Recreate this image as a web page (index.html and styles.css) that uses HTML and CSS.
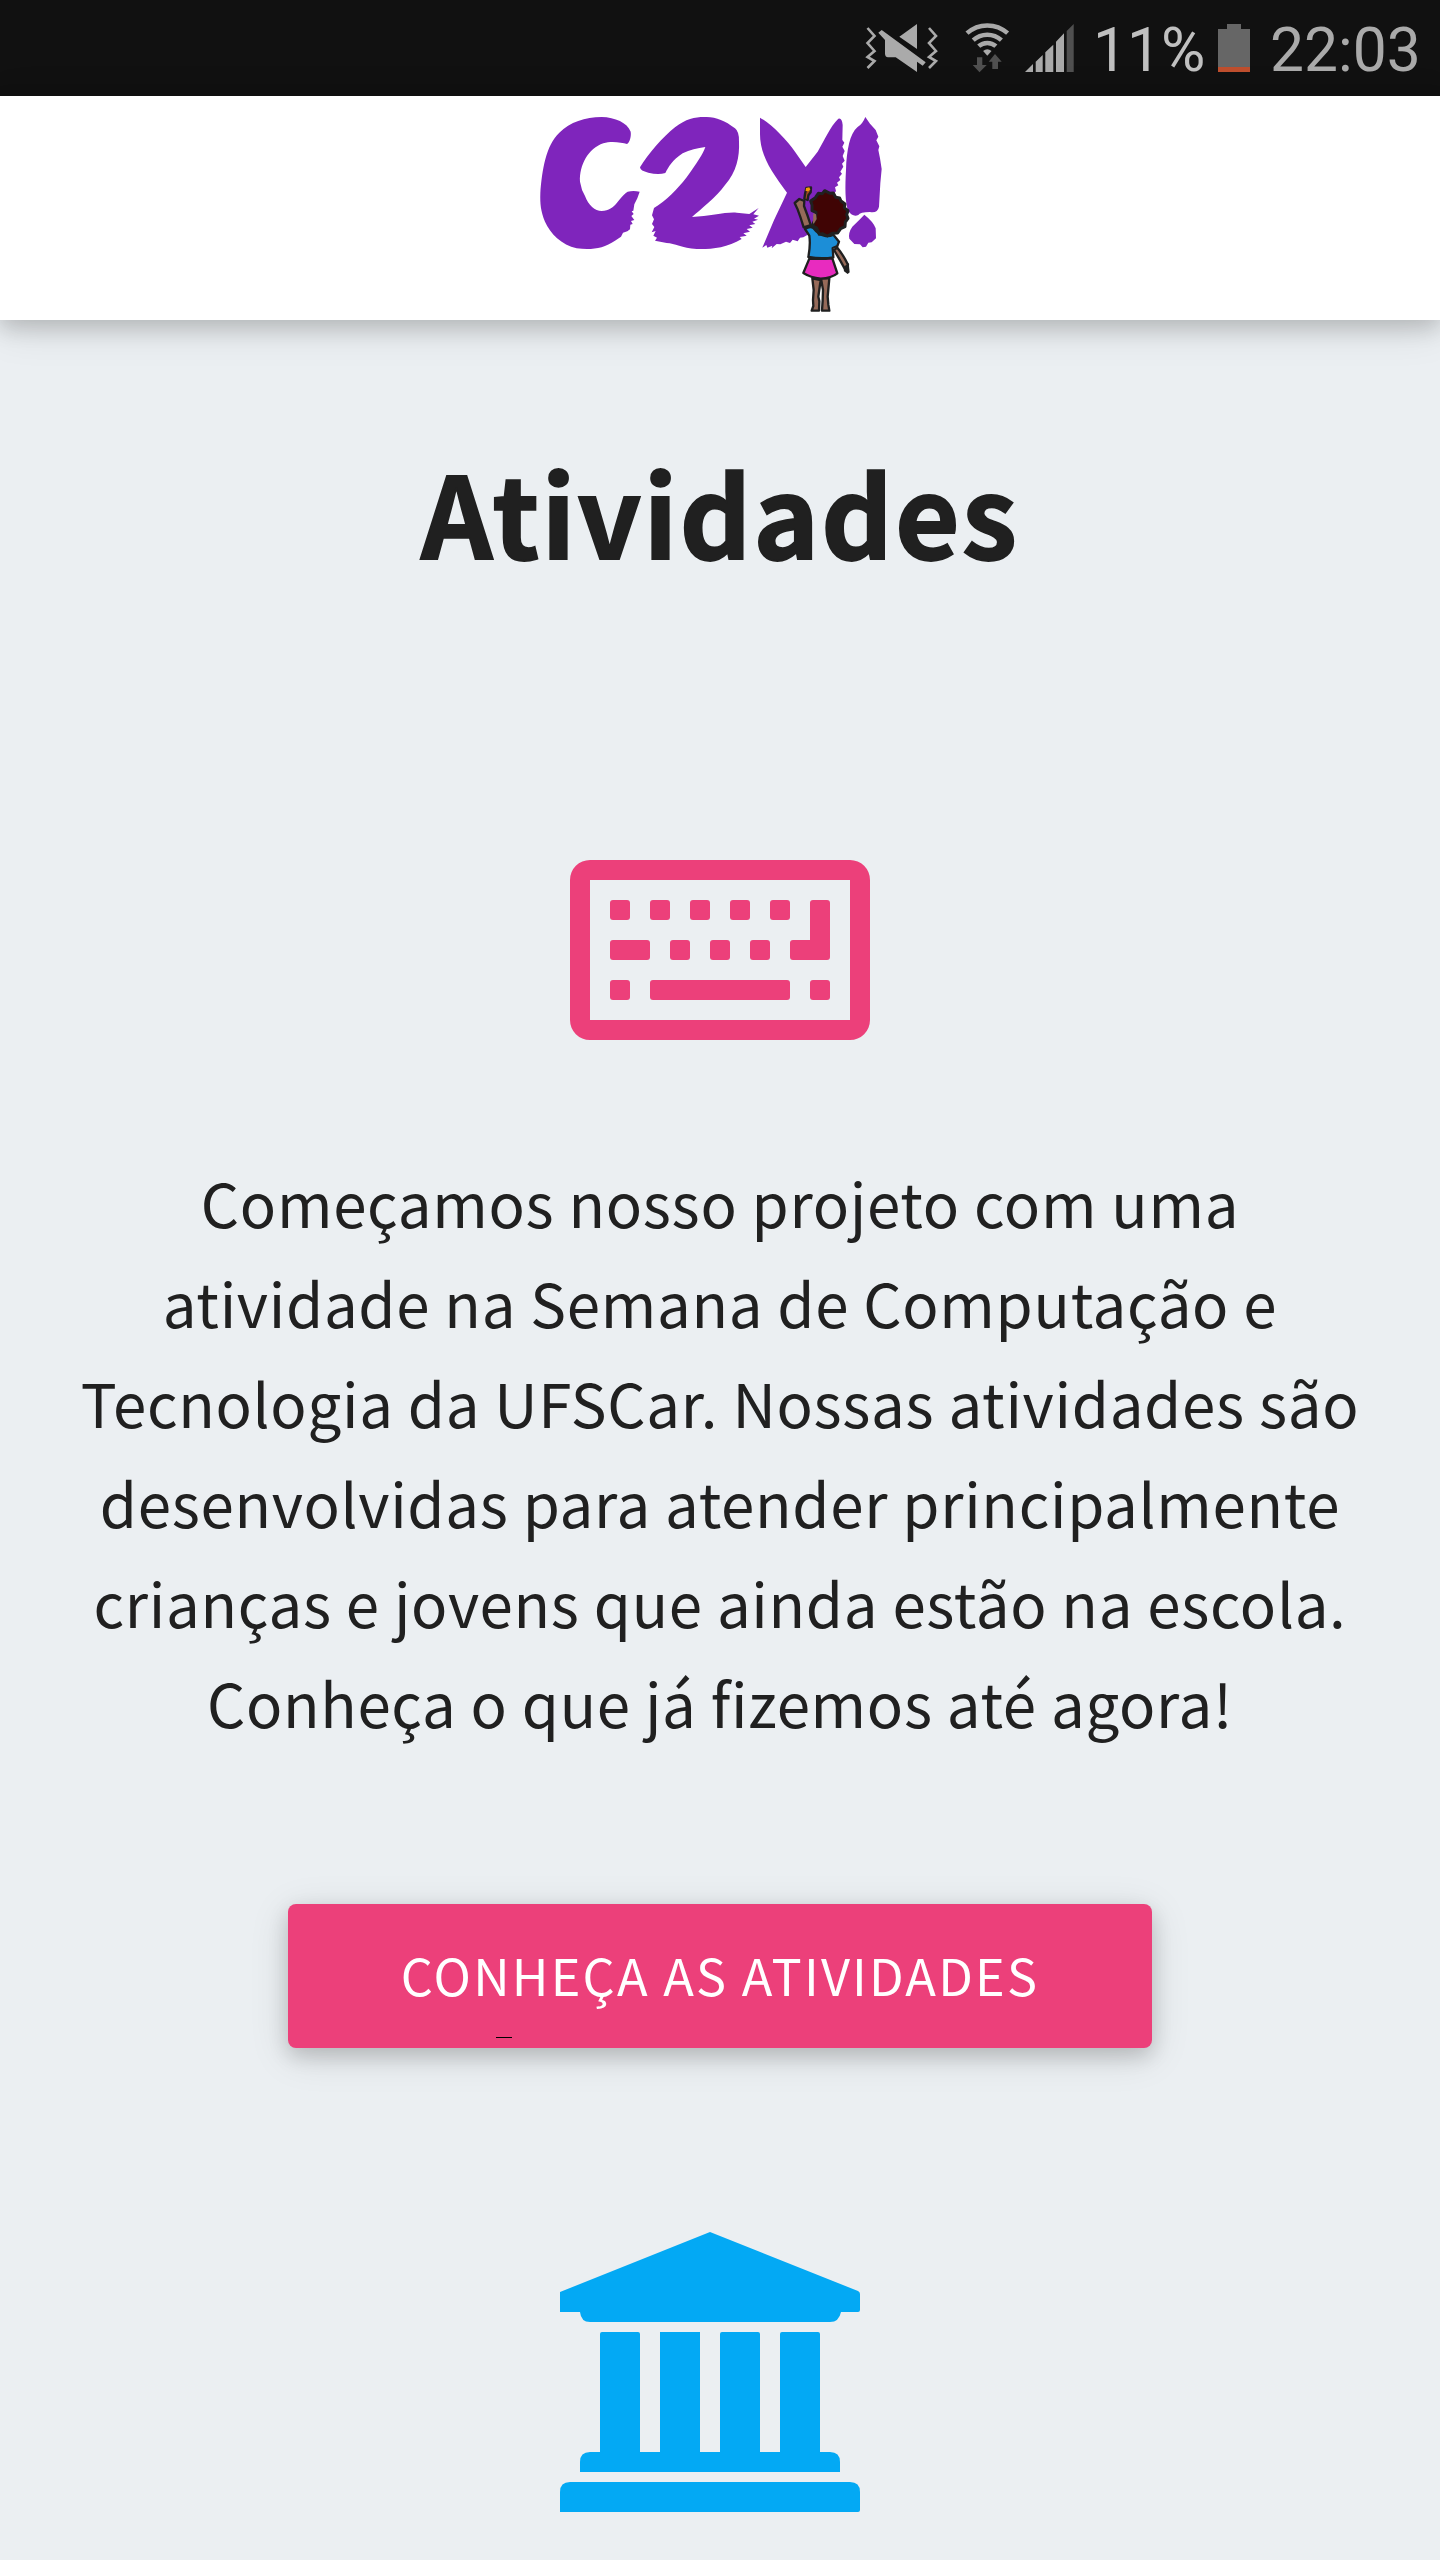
FILE: index.html
```html
<!DOCTYPE html>
<html lang="pt-BR">
<head>
<meta charset="utf-8">
<title>C2Y! Atividades</title>
<link rel="stylesheet" href="styles.css">
</head>
<body>
<div class="status-bar">
  <svg class="status-icons" viewBox="0 0 240 96" aria-hidden="true">
    <g fill="none" stroke="#aaa" stroke-width="2.600">
      <path d="M7.500 28l7 8-7 7 7 8-7 6 7 4-7 7"/>
      <path d="M69 28l7 8-7 7 7 8-7 6 7 4-7 7"/>
    </g>
    <g fill="#aaa">
      <path d="M57 24v25L39.300 36.700zM21.700 30l44 32.300-3 3.400L57 61.700V72L35.700 57.300H28Q25 57 25 53.500V40L18.300 32.700z"/>
      <path d="M165 72l8-8v8zM175.700 72V61.700l7-6.700V72zM185.300 72V52.300l8-7.600V72zM196 72V41.700l8-8.400V72z"/>
      <path d="M127.300 55.700l-4.200-4.700q4.200-3.300 8.400 0z"/>
    </g>
    <path fill="#505050" d="M206.700 72V31l7-7v48zM117 57.300h5.300V65h4.400l-7.200 7.300-6.800-7.300h4.300zM132.300 69v-7.300h-3.600L135 54l6.700 7.700H138V69z"/>
    <g fill="none" stroke="#aaa" stroke-width="4.500">
      <path d="M107 33.200a30.300 30.300 0 0 1 40.600 0M113.200 40.100a21 21 0 0 1 28.200 0M118.700 46.200a12.800 12.800 0 0 1 17.200 0"/>
    </g>
  </svg>
  <span class="battery-level">11%</span>
  <svg class="battery-icon" viewBox="0 0 32 48" aria-hidden="true">
    <path fill="#666" d="M9 0h14v5h9v39H0V5h9z"/><path fill="#bf4f2e" d="M0 43h32v5H0z"/>
  </svg>
  <span class="clock">22:03</span>
</div>
<header class="app-bar">
  <svg class="logo" viewBox="60 60 1029 612" role="img" aria-label="C2Y!">
    <g fill="#7f25bc">
      <path d="M61 310C66 240 78 165 118 128C150 96 195 82 245 81C285 82 322 98 332 125C334 138 330 156 321 162C305 158 275 152 250 160C205 175 178 225 180 275Q184 300 195 318C205 345 225 363 245 363C290 360 292 325 323 305Q340 301 359 305L352 325 343 343 340 362 335 364 341 372 334 378 343 390 333 393 338 402 331 404 330 418 322 424 309 428 303 440 285 452C250 476 215 480 170 475C125 465 90 430 75 395C62 365 60 340 61 310z"/>
      <path d="M360 232C385 190 430 140 465 112C500 84 530 80 560 81C590 82 615 92 645 115Q658 125 657 155C659 200 650 245 615 285C590 320 540 360 516 381C570 378 620 365 650 368L688 372 716 354 700 373 717 377 702 386 714 389 697 395 706 402 688 406 698 413 680 417 690 425 670 430 680 437 659 441 665 447C620 475 570 478 530 477C485 474 465 460 440 459L405 452 411 443 400 437 407 423 395 427 403 411 396 402 402 388 396 376 402 354C440 332 470 300 500 262C530 220 550 190 556 171Q520 175 488 190C455 212 447 230 436 249Q415 256 385 248Q361 243 360 232z"/>
      <path d="M720 83C755 102 800 150 825 185L857 231 893 185C915 148 930 110 955 86Q966 82 968 105L967 150 973 158 967 170 974 183 968 198 974 212 966 221 970 230 961 245 966 251 957 262 961 270 951 278 955 286 945 292 948 303 930 330 888 420 850 442 840 443 833 454 818 449 810 459 798 455 781 463 770 462 755 475 757 467 742 473 739 465 727 473Q760 390 801 308C755 245 718 195 720 125z"/>
      <path d="M1036 81L1050 101 1067 120 1075 140 1069 151 1078 169 1075 180 1080 205 1085 237 1081 280 1077 350Q1073 370 1050 366Q1020 366 1015 375Q998 382 985 363C975 340 975 290 978 240C980 180 990 130 1012 112Q1028 102 1036 81z"/>
      <path d="M1033 374Q1060 395 1067 415L1068 445 1055 457 1045 458 1038 470 1028 472 1020 463 1003 462 988 446Q984 428 997 410Q1018 390 1033 374z"/>
    </g>
    <g stroke="#202020" stroke-width="7" stroke-linejoin="round">
      <path fill="#966a59" d="M851 412Q842 382 832 356L824 339 838 327 853 333 852 348Q863 376 872 405z"/>
      <path fill="#9e4a24" d="M853 327l2-15 4-18 14-2-1 15-7 9-2 14z"/>
      <path fill="#966a59" d="M942 480Q960 510 972 532L980 543 984 524Q968 492 952 473z"/>
      <path fill="#966a59" d="M877 565l4 35-2 30 1 18-5 14h22l1-28-3-14 7-50zM903 565l6 35-1 32-2 30h22l-3-18-2-24 5-55z"/>
      <path fill="#1c8ed7" d="M855 417Q870 407 880 414C900 440 925 442 940 434L957 455 952 468 938 474 940 502Q905 508 865 501Q872 465 868 437z"/>
      <path fill="#e82bbf" d="M868 506Q905 508 937 505L952 550Q935 564 902 566Q872 563 850 549z"/>
      <path fill="#400404" stroke-width="9" d="M876 345L872 333 886 323 895 310 907 311 914 302 930 310 940 309 947 322 959 324 963 333 975 342 973 353 984 362 980 374 984 385 976 396 975 410 962 416 953 429 937 430 922 438 907 431 898 433 890 414 877 407 886 386 888 367 876 362z"/>
    </g>
    <path fill="#966a59" d="M880 370l8 3 2 14-6 10-5 5z"/>
    <path fill="#f29a08" d="M858 294l10-2 3 7-6 5-8-1z"/>
    <path fill="#202020" d="M970 532l16-13 3 28-6 5-11-8z"/>
  </svg>
</header>
<main class="content">
  <h1 class="title">Atividades</h1>
  <svg class="keyboard-icon" viewBox="0 0 300 180" aria-hidden="true">
    <path fill-rule="evenodd" d="M20 0H280A20 20 0 0 1 300 20V160A20 20 0 0 1 280 180H20A20 20 0 0 1 0 160V20A20 20 0 0 1 20 0zM20 20V160H280V20z"/>
    <g>
      <rect x="40" y="40" width="20" height="20" rx="3"/><rect x="80" y="40" width="20" height="20" rx="3"/><rect x="120" y="40" width="20" height="20" rx="3"/><rect x="160" y="40" width="20" height="20" rx="3"/><rect x="200" y="40" width="20" height="20" rx="3"/>
      <rect x="40" y="80" width="40" height="20" rx="3"/><rect x="100" y="80" width="20" height="20" rx="3"/><rect x="140" y="80" width="20" height="20" rx="3"/><rect x="180" y="80" width="20" height="20" rx="3"/>
      <path d="M243 40h14q3 0 3 3v54q0 3-3 3h-34q-3 0-3-3V83q0-3 3-3h17V43q0-3 3-3z"/>
      <rect x="40" y="120" width="20" height="20" rx="3"/><rect x="80" y="120" width="140" height="20" rx="3"/><rect x="240" y="120" width="20" height="20" rx="3"/>
    </g>
  </svg>
  <p class="intro">Começamos nosso projeto com uma<br>atividade na Semana de Computação e<br>Tecnologia da UFSCar. Nossas atividades são<br>desenvolvidas para atender principalmente<br>crianças e jovens que ainda estão na escola.<br>Conheça o que já fizemos até agora!</p>
  <a class="button" href="#">Conheça as atividades</a>
  <svg class="bank-icon" viewBox="0 0 300 280" aria-hidden="true">
    <path d="M150 0L298 59q2 1 2 3v16q0 2-2 2H281q-2 10-11 10H30q-9 0-10-10H0V60z"/>
    <path d="M40 102q0-2 2-2H78q2 0 2 2V220h20V100h40V220h20V102q0-2 2-2h36q2 0 2 2V220h20V102q0-2 2-2h36q2 0 2 2V220h10q10 0 10 10v10H20V230q0-10 10-10H40z"/>
    <path d="M10 250H290q10 0 10 10v18q0 2-2 2H0V260q0-10 10-10z"/>
  </svg>
</main>
</body>
</html>
```
FILE: styles.css
```css
* { box-sizing: border-box; }
body {
  margin: 0;
  width: 1440px;
  height: 2560px;
  overflow: hidden;
  background: #ebeff2;
  color: #202020;
  font-family: "Noto Sans CJK SC", "Noto Sans", sans-serif;
}
.status-bar {
  display: flex;
  align-items: center;
  height: 96px;
  padding-left: 860px;
  background: #111;
  color: #aaa;
  font: 400 60.5px/96px Roboto, sans-serif;
}
.status-icons { width: 240px; height: 96px; margin-right: -7px; }
.battery-level { width: 125px; padding-top: 5px; color: #c0c0c0; }
.battery-icon { width: 32px; height: 48px; }
.clock { padding: 5px 0 0 20px; }
.app-bar {
  position: relative;
  display: flex;
  justify-content: center;
  height: 224px;
  padding: 14px 17px 0 0;
  background: #fff;
  box-shadow: 0 8px 20px rgba(0, 0, 0, .16), 0 8px 40px rgba(0, 0, 0, .12);
}
.logo { width: 343px; height: 204px; }
.content {
  display: flex;
  flex-direction: column;
  align-items: center;
  padding-top: 121px;
}
.title {
  margin: 0;
  font-size: 111.5px;
  line-height: 140px;
  font-weight: 700;
  letter-spacing: 2px;
  -webkit-text-stroke: 1.8px #202020;
}
.keyboard-icon { width: 300px; height: 180px; margin-top: 279px; fill: #ec407a; }
.intro {
  margin: 112px 0 152px;
  font-size: 60px;
  line-height: 100px;
  letter-spacing: .7px;
  text-align: center;
  white-space: nowrap;
}
.button {
  position: relative;
  width: 864px;
  height: 144px;
  border-radius: 8px;
  background: #ec407a;
  box-shadow: 0 8px 20px rgba(0, 0, 0, .16), 0 8px 40px rgba(0, 0, 0, .12);
  color: #fff;
  font-size: 50.4px;
  line-height: 142px;
  letter-spacing: 2.2px;
  text-align: center;
  text-decoration: none;
  text-transform: uppercase;
}
.button::after {
  content: "";
  position: absolute;
  left: 208px;
  top: 133px;
  width: 16px;
  height: 1px;
  background: #000;
}
.bank-icon { width: 300px; height: 280px; margin: 184px 20px 0 0; fill: #03a9f4; }
```
